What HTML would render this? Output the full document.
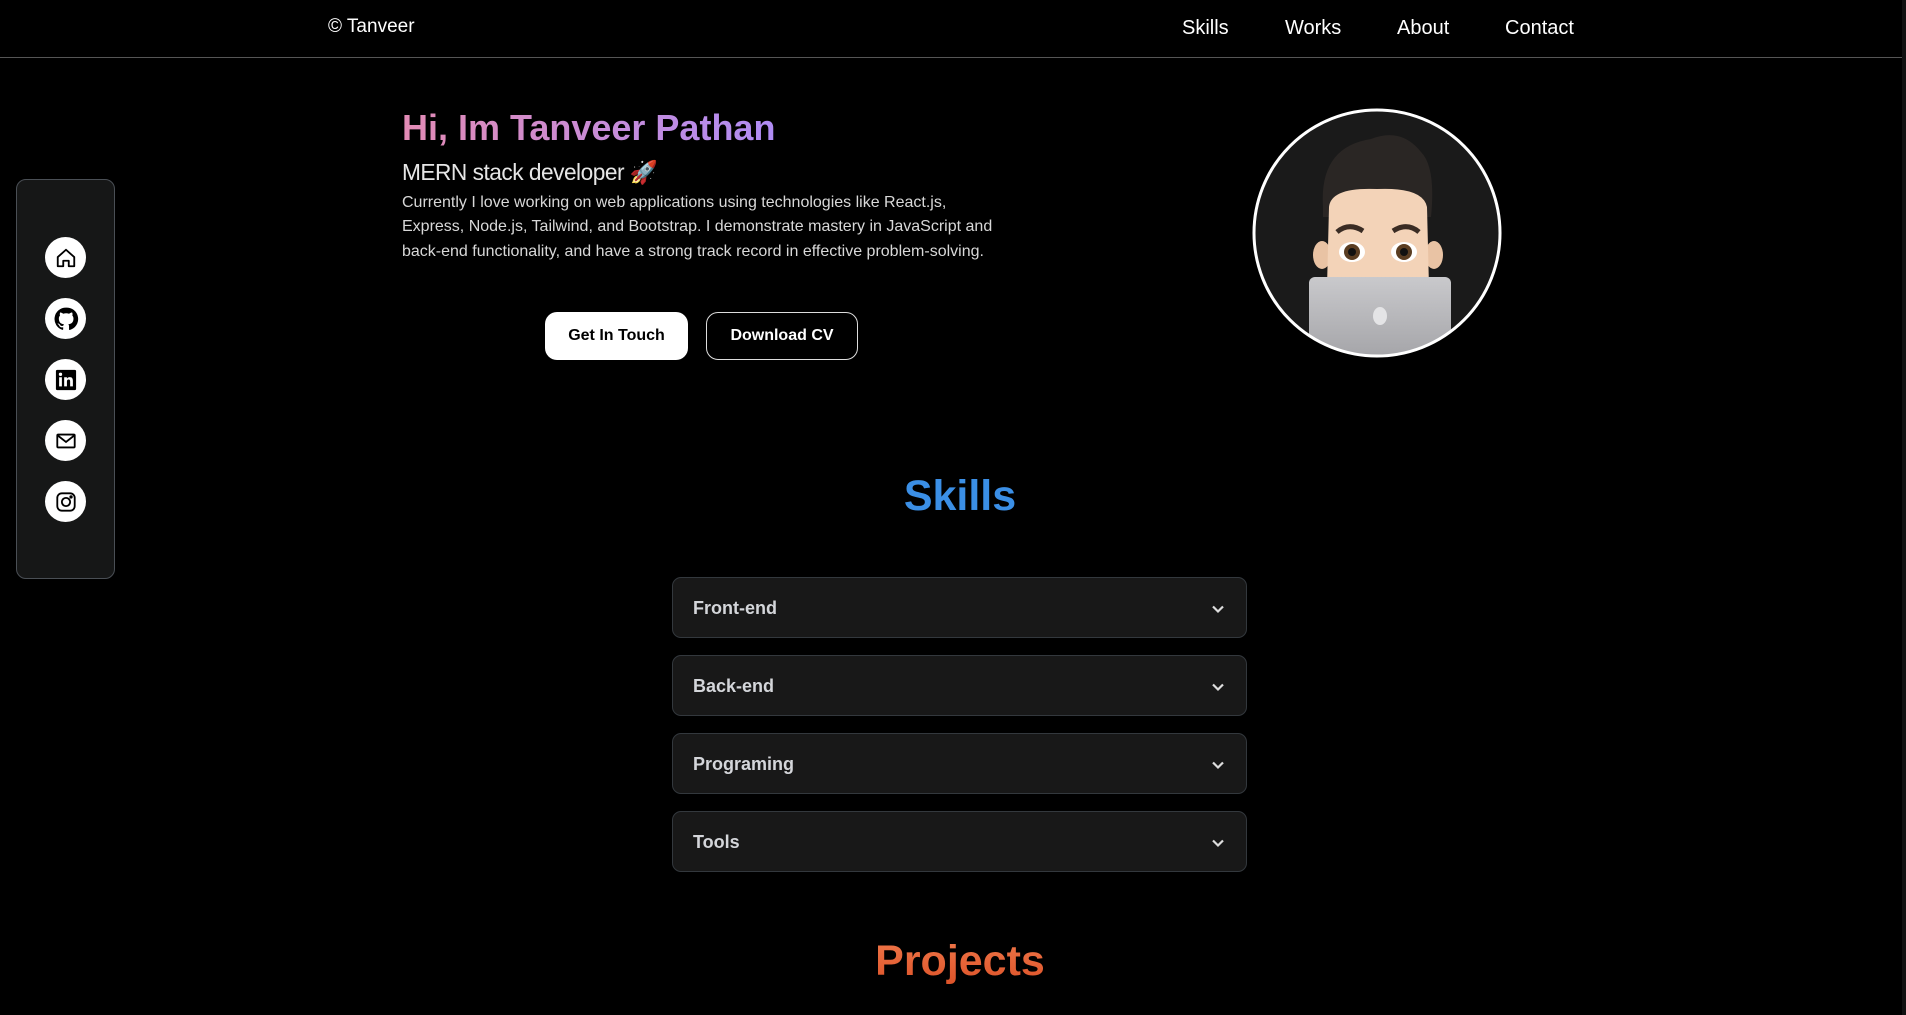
<!DOCTYPE html>
<html><head><meta charset="utf-8"><style>
*{margin:0;padding:0;box-sizing:border-box}
body{width:1906px;height:1015px;background:#000;overflow:hidden;font-family:"Liberation Sans",Arial,sans-serif;color:#fff;position:relative}
.abs{position:absolute}
header{position:absolute;left:0;top:0;width:1906px;height:58px;border-bottom:1px solid #555}
.logo{left:328px;top:16px;font-size:19px}
.nav{top:17px;font-size:20px}
h1{position:absolute;left:402px;top:107px;font-size:36px;font-weight:bold;background:linear-gradient(90deg,#e38bb5,#b08cf5);-webkit-background-clip:text;background-clip:text;color:transparent;white-space:nowrap}
.sub{left:402px;top:159px;font-size:22.7px;color:#e6e6e6;letter-spacing:-0.5px}
.para{left:402px;top:191px;width:600px;font-size:16px;line-height:24.3px;color:#d8d8d8}
.btn{position:absolute;top:312px;height:48px;border-radius:12px;font-size:16px;font-weight:bold;display:flex;align-items:center;justify-content:center}
.side{left:16px;top:179px;width:99px;height:400px;background:#161717;border:1px solid #4a4f55;border-radius:10px}
.ic{position:absolute;left:28px;width:41px;height:41px;border-radius:50%;background:#fff;display:flex;align-items:center;justify-content:center}
.h2{position:absolute;width:1906px;left:7px;text-align:center;font-weight:bold;font-size:43px}
.acc{position:absolute;left:672px;width:575px;height:61px;background:#181818;border:1px solid #33383d;border-radius:9px}
.acc span{position:absolute;left:20px;top:20px;font-size:18px;font-weight:bold;color:#d4d6da}
.acc svg{position:absolute;right:20px;top:23px}
</style></head><body>
<header>
<div class="abs logo">© Tanveer</div>
<div class="abs nav" style="left:1182px">Skills</div>
<div class="abs nav" style="left:1285px">Works</div>
<div class="abs nav" style="left:1397px">About</div>
<div class="abs nav" style="left:1505px">Contact</div>
</header>
<div class="abs" style="right:0;top:0;width:4px;height:1015px;background:#111"></div>

<h1>Hi, Im Tanveer Pathan</h1>
<div class="abs sub">MERN stack developer 🚀</div>
<div class="abs para">Currently I love working on web applications using technologies like React.js, Express, Node.js, Tailwind, and Bootstrap. I demonstrate mastery in JavaScript and back-end functionality, and have a strong track record in effective problem-solving.</div>
<div class="btn" style="left:545px;width:143px;background:#fff;color:#000">Get In Touch</div>
<div class="btn" style="left:706px;width:152px;border:1px solid #ddd;color:#fff">Download CV</div>

<svg class="abs" style="left:1251px;top:107px" width="252" height="252" viewBox="0 0 252 252">
<defs><clipPath id="c"><circle cx="126" cy="126" r="123"/></clipPath>
<linearGradient id="lap" x1="0" y1="0" x2="0" y2="1"><stop offset="0" stop-color="#c9c9cc"/><stop offset="1" stop-color="#9c9ca0"/></linearGradient></defs>
<circle cx="126" cy="126" r="123" fill="#1a1a1a"/>
<g clip-path="url(#c)">
<path d="M72 100 Q68 40 120 32 Q150 20 170 45 Q185 60 180 110 L72 110Z" fill="#2a2624"/>
<ellipse cx="71" cy="148" rx="9" ry="14" fill="#e9c3a4"/><ellipse cx="183" cy="148" rx="9" ry="14" fill="#e9c3a4"/>
<path d="M78 100 Q80 80 126 82 Q172 80 176 100 L178 180 L76 180Z" fill="#f3d3b8"/>
<path d="M86 125 Q98 115 112 124" stroke="#3a2c24" stroke-width="5" fill="none"/>
<path d="M142 124 Q156 115 168 125" stroke="#3a2c24" stroke-width="5" fill="none"/>
<ellipse cx="101" cy="145" rx="13" ry="10" fill="#fff"/><circle cx="101" cy="145" r="8" fill="#5a3d22"/><circle cx="101" cy="145" r="4" fill="#111"/>
<ellipse cx="153" cy="145" rx="13" ry="10" fill="#fff"/><circle cx="153" cy="145" r="8" fill="#5a3d22"/><circle cx="153" cy="145" r="4" fill="#111"/>
<rect x="58" y="170" width="142" height="100" rx="6" fill="url(#lap)"/>
<ellipse cx="129" cy="209" rx="7" ry="9" fill="#e4e4e6"/>
</g>
<circle cx="126" cy="126" r="123" fill="none" stroke="#fff" stroke-width="3"/>
</svg>

<div class="abs side">
<div class="ic" style="top:57px"><svg width="22" height="22" viewBox="0 0 24 24" fill="none" stroke="#000" stroke-width="2" stroke-linejoin="round"><path d="M3 11 L12 3 L21 11 V21 H15 V15 H9 V21 H3Z"/></svg></div>
<div class="ic" style="top:118px"><svg width="26" height="26" viewBox="0 0 24 24"><path fill="#000" d="M12 1.5a10.5 10.5 0 0 0-3.3 20.5c.5.1.7-.2.7-.5v-1.9c-2.9.6-3.500-1.3-3.5-1.3-.5-1.2-1.2-1.5-1.2-1.5-1-.7.1-.6.1-.6 1 .1 1.6 1.100 1.6 1.1.9 1.6 2.5 1.1 3.1.9.1-.7.4-1.1.7-1.4-2.3-.3-4.8-1.2-4.8-5.2 0-1.1.4-2.1 1.1-2.8-.1-.3-.5-1.3.1-2.8 0 0 .9-.3 2.9 1.1a10 10 0 0 1 5.3 0c2-1.4 2.9-1.1 2.9-1.1.6 1.5.2 2.5.1 2.8.7.7 1.1 1.7 1.1 2.8 0 4-2.5 4.9-4.8 5.2.4.3.7 1 .7 1.9v2.9c0 .3.2.6.7.5A10.5 10.5 0 0 0 12 1.5z"/></svg></div>
<div class="ic" style="top:179px"><svg width="22" height="22" viewBox="0 0 24 24"><rect x="1" y="1" width="22" height="22" rx="1.5" fill="#000"/><rect x="4.5" y="9" width="3" height="10" fill="#fff"/><circle cx="6" cy="5.8" r="1.8" fill="#fff"/><path d="M10 9h3v1.5c.6-1 1.7-1.7 3.2-1.7 2.4 0 3.3 1.5 3.3 4V19h-3v-5.5c0-1.3-.4-2.1-1.6-2.1-1.3 0-1.9.9-1.900 2.2V19h-3z" fill="#fff"/></svg></div>
<div class="ic" style="top:240px"><svg width="22" height="22" viewBox="0 0 24 24" fill="none" stroke="#000" stroke-width="2"><rect x="2.5" y="5" width="19" height="14" rx="1"/><path d="M3 6 L12 13 L21 6"/></svg></div>
<div class="ic" style="top:301px"><svg width="22" height="22" viewBox="0 0 24 24" fill="none" stroke="#000" stroke-width="2"><rect x="2.5" y="2.5" width="19" height="19" rx="5"/><circle cx="12" cy="12" r="4.5"/><circle cx="17.5" cy="6.5" r="0.8" fill="#000"/></svg></div>
</div>

<div class="h2" style="top:472px;color:#3b8fe6">Skills</div>

<div class="acc" style="top:577px"><span>Front-end</span><svg width="16" height="16" viewBox="0 0 16 16" fill="none" stroke="#ddd" stroke-width="2.2"><path d="M3 5.5 L8 10.5 L13 5.5"/></svg></div>
<div class="acc" style="top:655px"><span>Back-end</span><svg width="16" height="16" viewBox="0 0 16 16" fill="none" stroke="#ddd" stroke-width="2.2"><path d="M3 5.5 L8 10.5 L13 5.5"/></svg></div>
<div class="acc" style="top:733px"><span>Programing</span><svg width="16" height="16" viewBox="0 0 16 16" fill="none" stroke="#ddd" stroke-width="2.2"><path d="M3 5.5 L8 10.5 L13 5.5"/></svg></div>
<div class="acc" style="top:811px"><span>Tools</span><svg width="16" height="16" viewBox="0 0 16 16" fill="none" stroke="#ddd" stroke-width="2.2"><path d="M3 5.5 L8 10.5 L13 5.5"/></svg></div>

<div class="h2" style="top:937px;background:linear-gradient(180deg,#f0784a,#dc5228);-webkit-background-clip:text;background-clip:text;color:transparent">Projects</div>
</body></html>
